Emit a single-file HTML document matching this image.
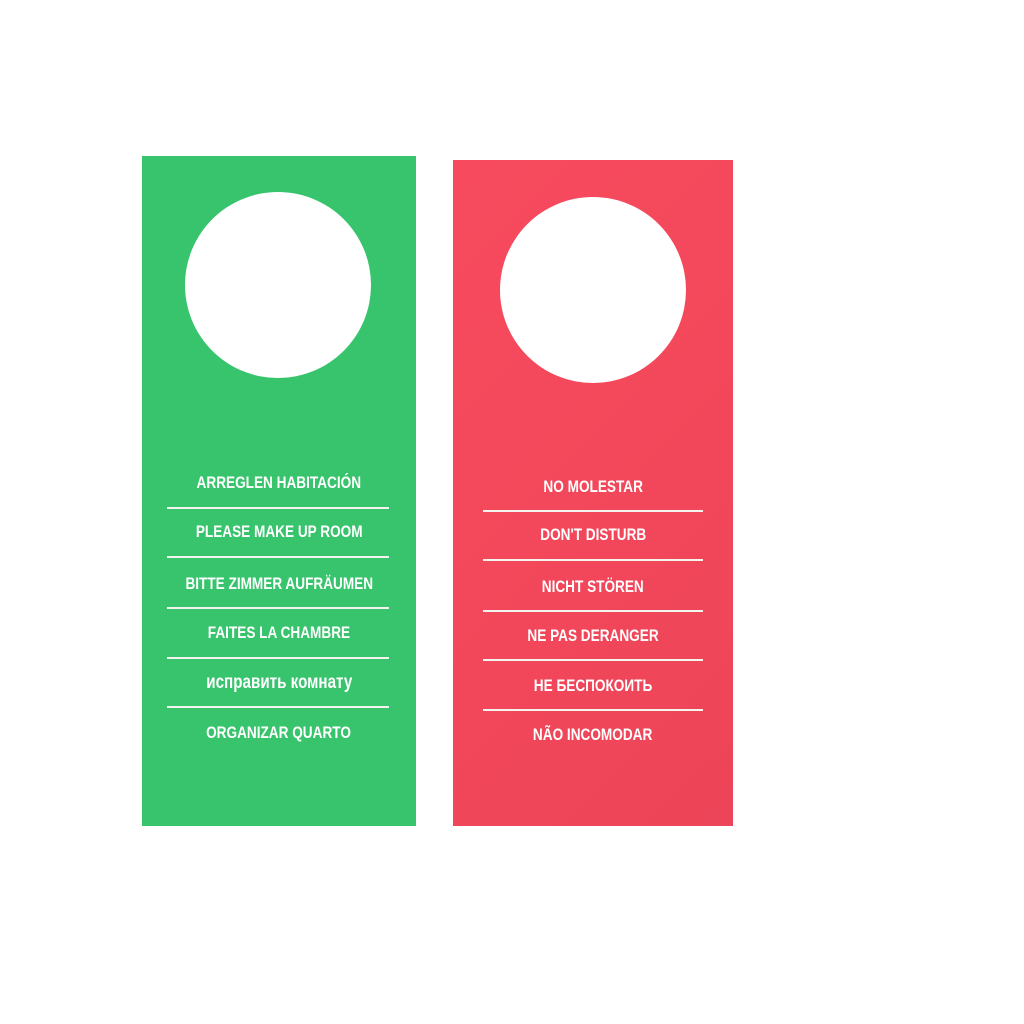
<!DOCTYPE html>
<html><head><meta charset="utf-8"><style>
html,body{margin:0;padding:0;background:#fff;width:1024px;height:1024px;overflow:hidden;position:relative}
.card{position:absolute}
.g{left:142px;top:156px;width:274px;height:670px;background:#37c46c}
.r{left:453px;top:160px;width:280px;height:666px;background:linear-gradient(135deg,#f74a5e,#f2475a 60%,#ec4458)}
.hole{position:absolute;width:186px;height:186px;border-radius:50%;background:#fff}
.t{position:absolute;left:0;width:100%;text-align:center;color:#fff;font-family:"Liberation Sans",sans-serif;font-weight:bold;font-size:17px;line-height:20px}
.t span{display:inline-block;transform:scaleX(0.8);white-space:nowrap}
.l{position:absolute;height:2px;background:#f4f4ee}
</style></head><body>
<div class="card g">
<div class="hole" style="left:43px;top:36px"></div>
<div class="t" style="top:317px"><span>ARREGLEN HABITACIÓN</span></div>
<div class="l" style="left:25px;width:222px;top:351px"></div>
<div class="t" style="top:366px"><span>PLEASE MAKE UP ROOM</span></div>
<div class="l" style="left:25px;width:222px;top:400px"></div>
<div class="t" style="top:418px"><span>BITTE ZIMMER AUFRÄUMEN</span></div>
<div class="l" style="left:25px;width:222px;top:451px"></div>
<div class="t" style="top:467px"><span>FAITES LA CHAMBRE</span></div>
<div class="l" style="left:25px;width:222px;top:501px"></div>
<div class="t" style="top:517px;font-size:19px"><span>исправить комнату</span></div>
<div class="l" style="left:25px;width:222px;top:550px"></div>
<div class="t" style="top:567px"><span>ORGANIZAR QUARTO</span></div>
</div>
<div class="card r">
<div class="hole" style="left:47px;top:37px"></div>
<div class="t" style="top:317px"><span>NO MOLESTAR</span></div>
<div class="l" style="left:30px;width:220px;top:350px"></div>
<div class="t" style="top:365px"><span>DON'T DISTURB</span></div>
<div class="l" style="left:30px;width:220px;top:399px"></div>
<div class="t" style="top:417px"><span>NICHT STÖREN</span></div>
<div class="l" style="left:30px;width:220px;top:450px"></div>
<div class="t" style="top:466px"><span>NE PAS DERANGER</span></div>
<div class="l" style="left:30px;width:220px;top:499px"></div>
<div class="t" style="top:516px"><span>НЕ БЕСПОКОИТЬ</span></div>
<div class="l" style="left:30px;width:220px;top:549px"></div>
<div class="t" style="top:565px"><span>NÃO INCOMODAR</span></div>
</div>
</body></html>
